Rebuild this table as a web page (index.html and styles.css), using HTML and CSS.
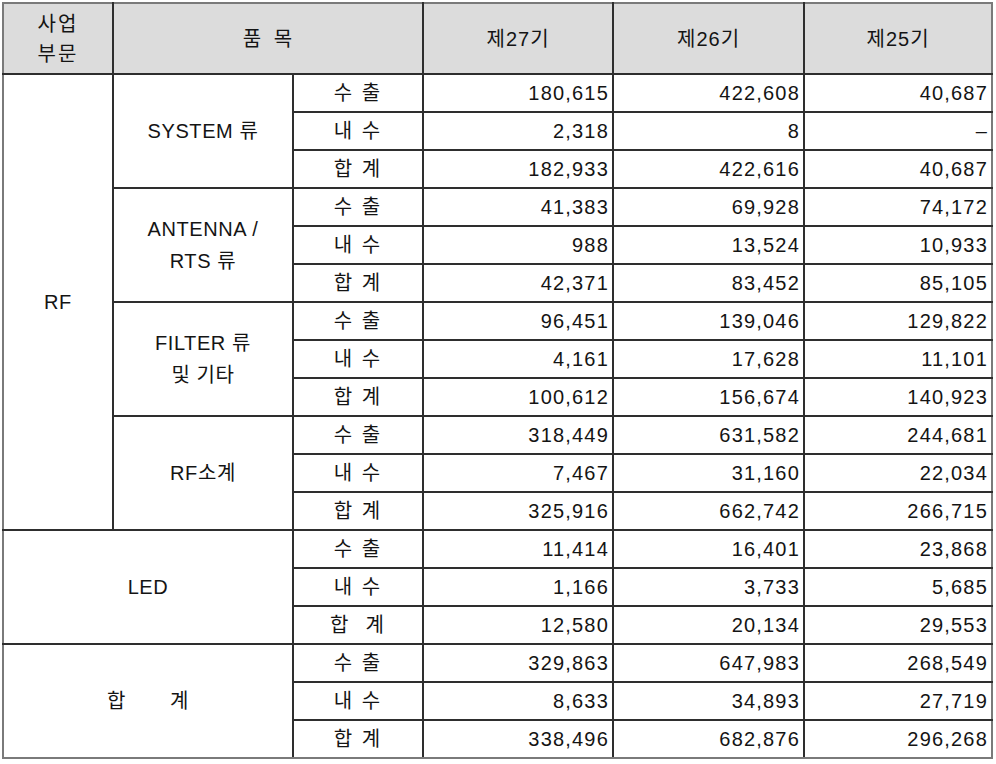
FILE: index.html
```html
<!DOCTYPE html>
<html lang="ko">
<head>
<meta charset="utf-8">
<link rel="stylesheet" href="styles.css">
</head>
<body>
<table class="sales">
  <colgroup>
    <col class="c1"><col class="c2"><col class="c3"><col class="c4"><col class="c5"><col class="c6">
  </colgroup>
  <thead>
    <tr class="head">
      <th>사업<br>부문</th>
      <th colspan="2" class="item">품 목</th>
      <th>제27기</th>
      <th>제26기</th>
      <th>제25기</th>
    </tr>
  </thead>
  <tbody>
    <tr><td rowspan="12" class="lbl">RF</td><td rowspan="3" class="lbl">SYSTEM 류</td><td class="kind">수 출</td><td class="num">180,615</td><td class="num">422,608</td><td class="num">40,687</td></tr>
    <tr><td class="kind">내 수</td><td class="num">2,318</td><td class="num">8</td><td class="num">–</td></tr>
    <tr><td class="kind">합 계</td><td class="num">182,933</td><td class="num">422,616</td><td class="num">40,687</td></tr>

    <tr><td rowspan="3" class="lbl">ANTENNA /<br>RTS 류</td><td class="kind">수 출</td><td class="num">41,383</td><td class="num">69,928</td><td class="num">74,172</td></tr>
    <tr><td class="kind">내 수</td><td class="num">988</td><td class="num">13,524</td><td class="num">10,933</td></tr>
    <tr><td class="kind">합 계</td><td class="num">42,371</td><td class="num">83,452</td><td class="num">85,105</td></tr>

    <tr><td rowspan="3" class="lbl">FILTER 류<br>및 기타</td><td class="kind">수 출</td><td class="num">96,451</td><td class="num">139,046</td><td class="num">129,822</td></tr>
    <tr><td class="kind">내 수</td><td class="num">4,161</td><td class="num">17,628</td><td class="num">11,101</td></tr>
    <tr><td class="kind">합 계</td><td class="num">100,612</td><td class="num">156,674</td><td class="num">140,923</td></tr>

    <tr><td rowspan="3" class="lbl">RF소계</td><td class="kind">수 출</td><td class="num">318,449</td><td class="num">631,582</td><td class="num">244,681</td></tr>
    <tr><td class="kind">내 수</td><td class="num">7,467</td><td class="num">31,160</td><td class="num">22,034</td></tr>
    <tr><td class="kind">합 계</td><td class="num">325,916</td><td class="num">662,742</td><td class="num">266,715</td></tr>

    <tr><td rowspan="3" colspan="2" class="lbl">LED</td><td class="kind">수 출</td><td class="num">11,414</td><td class="num">16,401</td><td class="num">23,868</td></tr>
    <tr><td class="kind">내 수</td><td class="num">1,166</td><td class="num">3,733</td><td class="num">5,685</td></tr>
    <tr><td class="kind">합&nbsp;&nbsp;계</td><td class="num">12,580</td><td class="num">20,134</td><td class="num">29,553</td></tr>

    <tr><td rowspan="3" colspan="2" class="lbl total">합<span class="gap"></span>계</td><td class="kind">수 출</td><td class="num">329,863</td><td class="num">647,983</td><td class="num">268,549</td></tr>
    <tr><td class="kind">내 수</td><td class="num">8,633</td><td class="num">34,893</td><td class="num">27,719</td></tr>
    <tr><td class="kind">합 계</td><td class="num">338,496</td><td class="num">682,876</td><td class="num">296,268</td></tr>
  </tbody>
</table>
</body>
</html>
```

FILE: styles.css
```css
html, body {
  margin: 0;
  padding: 0;
  background: #ffffff;
}

body {
  padding: 2px 0 0 2px;
  font-family: "Liberation Sans", "Noto Sans CJK KR", sans-serif;
  font-size: 20px;
  color: #141414;
}

.sales {
  border-collapse: collapse;
  table-layout: fixed;
  width: 991px;
  border: 2px solid #7a7a7a;
}

.c1 { width: 110px; }
.c2 { width: 180px; }
.c3 { width: 130px; }
.c4 { width: 190px; }
.c5 { width: 191px; }
.c6 { width: 188px; }

.sales th,
.sales td {
  border: 2px solid #2e2e2e;
  padding: 0;
  line-height: 32px;
}

.sales tr.head th {
  border-top-color: #7a7a7a;
}

.sales tr th:first-child,
.sales tr td.lbl:first-child {
  border-left-color: #7a7a7a;
}

.sales th:last-child,
.sales td:last-child {
  border-right-color: #7a7a7a;
}

.sales tbody tr:last-child td,
.sales td.total {
  border-bottom-color: #7a7a7a;
}

.head {
  height: 71px;
}

.head th {
  background: #dcdcdc;
  font-weight: normal;
  text-align: center;
  vertical-align: middle;
  letter-spacing: 1px;
}

.head th:first-child {
  line-height: 30px;
  letter-spacing: 2px;
}

.head th.item {
  word-spacing: 5px;
}

.sales tbody tr {
  height: 38px;
}

.lbl {
  text-align: center;
  vertical-align: middle;
  letter-spacing: 0.6px;
}

.kind {
  text-align: center;
  letter-spacing: 2px;
}

.num {
  text-align: right;
  padding-right: 3px !important;
  letter-spacing: 1.2px;
}

.gap {
  display: inline-block;
  width: 44px;
}
```
